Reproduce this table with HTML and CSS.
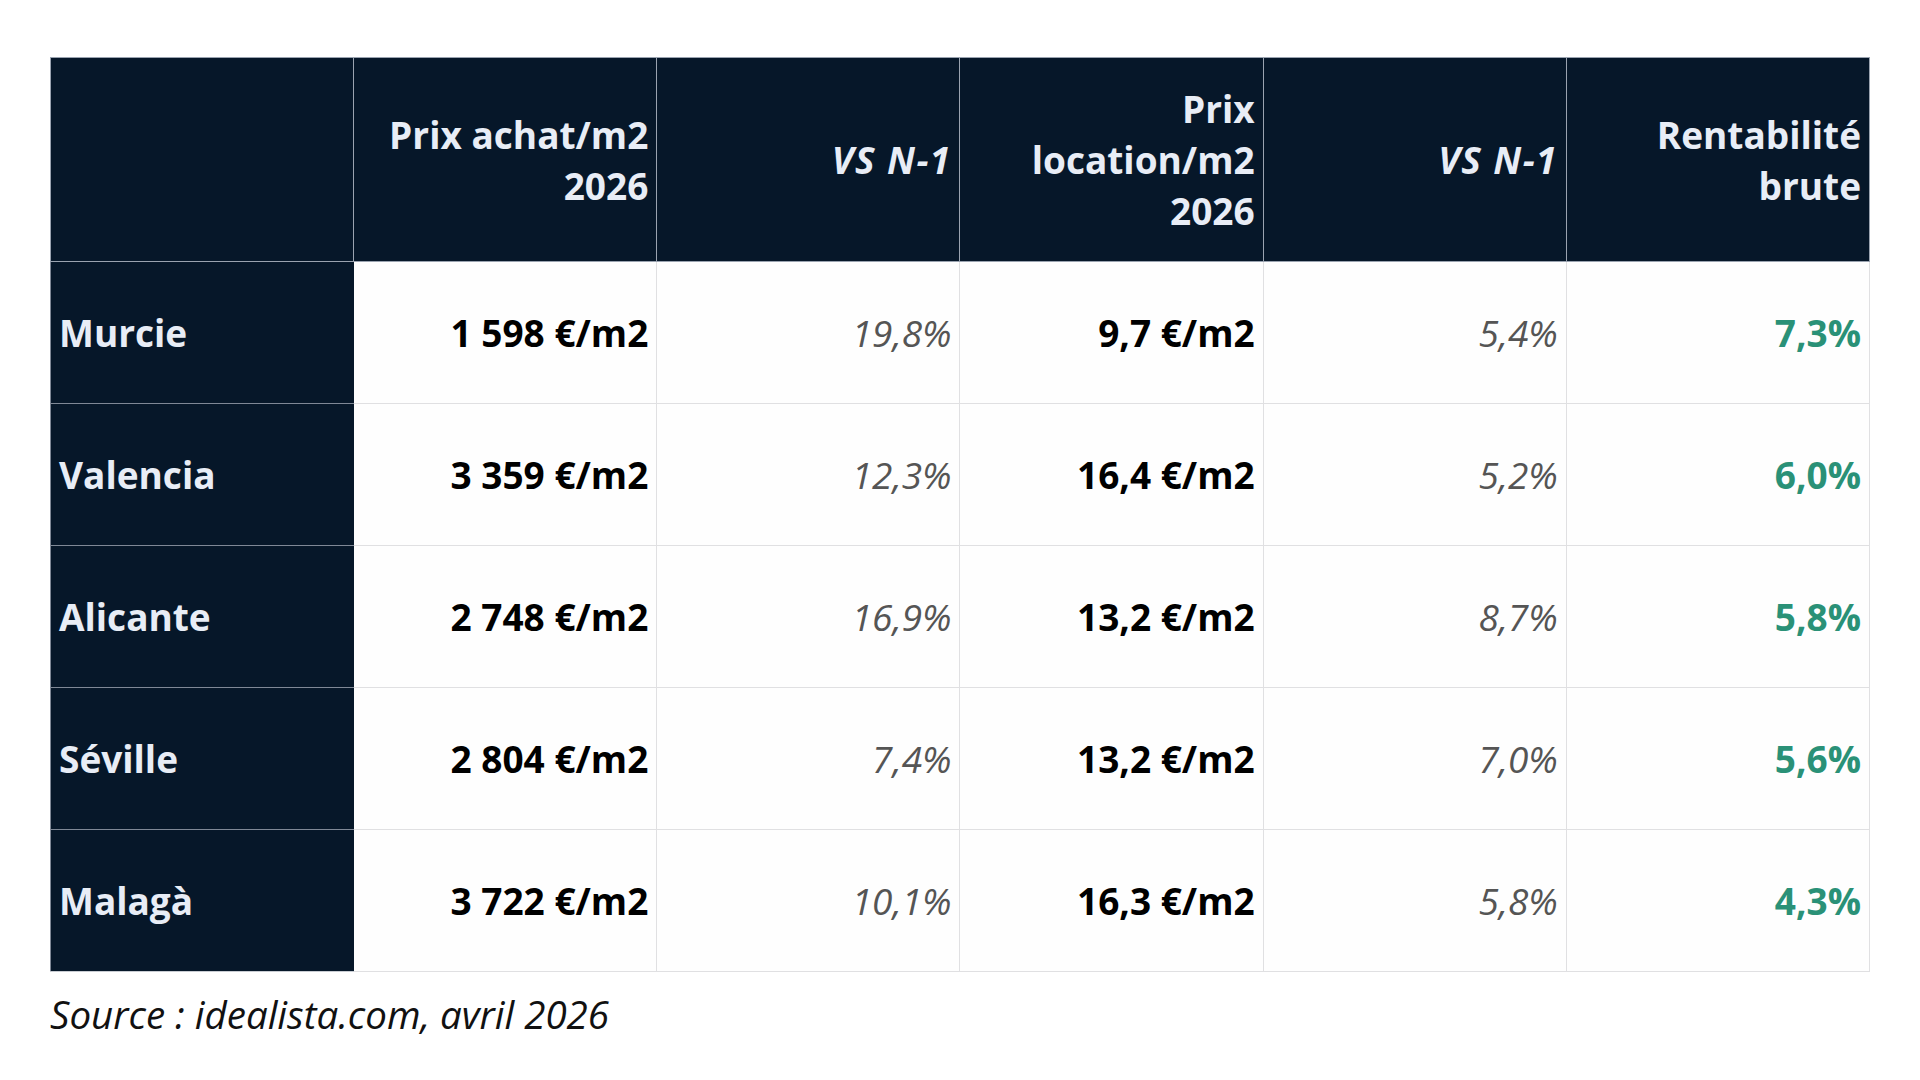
FILE: index.html
```html
<!DOCTYPE html>
<html lang="fr">
<head>
<meta charset="utf-8">
<title>Prix immobilier Espagne</title>
<link rel="stylesheet" href="styles.css">
</head>
<body>
<div class="page">
  <table class="prices">
    <thead>
      <tr>
        <th class="corner"></th>
        <th>Prix achat/m2<br>2026</th>
        <th class="it">VS N-1</th>
        <th>Prix<br>location/m2<br>2026</th>
        <th class="it">VS N-1</th>
        <th>Rentabilité<br>brute</th>
      </tr>
    </thead>
    <tbody>
      <tr>
        <th class="city">Murcie</th>
        <td class="val">1 598 €/m2</td>
        <td class="var">19,8%</td>
        <td class="val">9,7 €/m2</td>
        <td class="var">5,4%</td>
        <td class="yield">7,3%</td>
      </tr>
      <tr>
        <th class="city">Valencia</th>
        <td class="val">3 359 €/m2</td>
        <td class="var">12,3%</td>
        <td class="val">16,4 €/m2</td>
        <td class="var">5,2%</td>
        <td class="yield">6,0%</td>
      </tr>
      <tr>
        <th class="city">Alicante</th>
        <td class="val">2 748 €/m2</td>
        <td class="var">16,9%</td>
        <td class="val">13,2 €/m2</td>
        <td class="var">8,7%</td>
        <td class="yield">5,8%</td>
      </tr>
      <tr>
        <th class="city">Séville</th>
        <td class="val">2 804 €/m2</td>
        <td class="var">7,4%</td>
        <td class="val">13,2 €/m2</td>
        <td class="var">7,0%</td>
        <td class="yield">5,6%</td>
      </tr>
      <tr>
        <th class="city">Malagà</th>
        <td class="val">3 722 €/m2</td>
        <td class="var">10,1%</td>
        <td class="val">16,3 €/m2</td>
        <td class="var">5,8%</td>
        <td class="yield">4,3%</td>
      </tr>
    </tbody>
  </table>
  <p class="source">Source : idealista.com, avril 2026</p>
</div>
</body>
</html>
```
FILE: styles.css
```css
html, body {
  margin: 0;
  padding: 0;
  background: #ffffff;
}

body {
  font-family: "Open Sans", "Noto Sans", sans-serif;
  color: #000000;
}

.page {
  padding: 57px 50px 0 50px;
}

.prices {
  width: 1820px;
  border-collapse: collapse;
  table-layout: fixed;
  font-size: 37px;
}

.prices th,
.prices td {
  padding: 0 8px;
  text-align: right;
  vertical-align: middle;
}

.prices thead th {
  height: 203px;
  background: #061729;
  color: #e8edf6;
  font-weight: 700;
  line-height: 51px;
  border: 1px solid #9aa3b0;
}

.prices thead th.it {
  font-style: italic;
  letter-spacing: 1.4px;
}

.prices tbody td {
  height: 141px;
  background: #fefefe;
  border: 1px solid #e0e0e2;
}

.prices tbody th.city {
  background: #061729;
  color: #e8edf6;
  font-weight: 700;
  text-align: left;
  border: 1px solid #7f8896;
  border-right-color: #061729;
}

.prices tbody tr:last-child th.city {
  border-bottom-color: #c8ccd2;
}

.val {
  font-weight: 700;
  color: #000000;
}

.var {
  font-style: italic;
  font-weight: 400;
  color: #555555;
}

.yield {
  font-weight: 700;
  color: #2a9177;
}

.source {
  margin: 16px 0 0 0;
  font-size: 38.5px;
  font-style: italic;
  color: #111111;
}
```
